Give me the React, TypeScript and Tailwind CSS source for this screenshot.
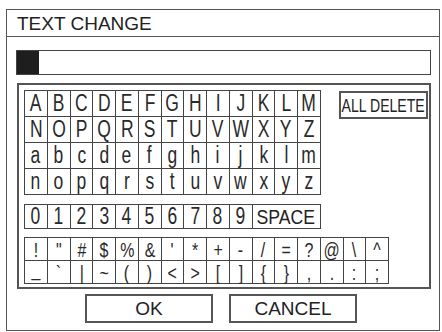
const LETTERS = [
  'A', 'B', 'C', 'D', 'E', 'F', 'G', 'H', 'I', 'J', 'K', 'L', 'M',
  'N', 'O', 'P', 'Q', 'R', 'S', 'T', 'U', 'V', 'W', 'X', 'Y', 'Z',
  'a', 'b', 'c', 'd', 'e', 'f', 'g', 'h', 'i', 'j', 'k', 'l', 'm',
  'n', 'o', 'p', 'q', 'r', 's', 't', 'u', 'v', 'w', 'x', 'y', 'z',
]

const DIGITS = ['0', '1', '2', '3', '4', '5', '6', '7', '8', '9']

const SYMBOLS = [
  '!', '"', '#', '$', '%', '&', "'", '*', '+', '-', '/', '=', '?', '@', '\\', '^',
  '_', '`', '|', '~', '(', ')', '<', '>', '[', ']', '{', '}', ',', '.', ':', ';',
]

function Key({ label, h, size = 'text-[23px]' }: { label: string; h: string; size?: string }) {
  return (
    <div className={`${h} border-r border-b border-[#444] flex items-center justify-center`}>
      <span
        className={`inline-block ${size} leading-none scale-x-[0.76] text-[#2a2a2a] ${
          label === '_' ? '-translate-y-[4px]' : ''
        }`}
      >
        {label}
      </span>
    </div>
  )
}

export default function App() {
  return (
    <div className="w-[442px] h-[332px] bg-white pt-[9px] pl-[6px] font-['Liberation_Sans',Arial,sans-serif]">
      <div className="w-[434px] h-[322px] border border-[#555] flex flex-col">
        {/* title bar */}
        <div className="h-[27px] border-b border-[#555] flex items-center pl-[10px]">
          <span className="text-[19px] leading-none text-[#222]">TEXT CHANGE</span>
        </div>

        {/* input field with cursor */}
        <div className="mt-[13px] ml-[9px] w-[415px] h-[25px] border border-[#444] flex">
          <div className="w-[22px] h-full bg-[#1e1e1e]" />
        </div>

        {/* keyboard panel */}
        <div className="mt-[8px] ml-[10px] w-[414px] h-[206px] border-2 border-[#555] pt-[5px] pl-[5px] flex flex-col">
          <div className="flex items-start">
            <div className="grid grid-cols-[repeat(13,22.75px)] border-l border-t border-[#444]">
              {LETTERS.map((c, i) => (
                <Key key={i} label={c} h="h-[26px]" />
              ))}
            </div>
            <div className="ml-[18px] mt-px w-[89px] h-[28px] border-2 border-[#555] flex items-center justify-center">
              <span className="inline-block text-[19px] leading-none scale-x-[0.74] whitespace-nowrap text-[#222]">
                ALL DELETE
              </span>
            </div>
          </div>

          <div className="mt-[9px] grid grid-cols-[repeat(10,22.75px)_68.25px] w-fit border-l border-t border-[#444]">
            {DIGITS.map((c) => (
              <Key key={c} label={c} h="h-[24px]" />
            ))}
            <div className="h-[24px] border-r border-b border-[#444] flex items-center justify-center">
              <span className="inline-block text-[21px] leading-none scale-x-[0.84] text-[#222]">SPACE</span>
            </div>
          </div>

          <div className="mt-[8px] grid grid-cols-[repeat(16,22.75px)] w-fit border-l border-t border-[#444]">
            {SYMBOLS.map((c, i) => (
              <Key key={i} label={c} h="h-[23px]" size="text-[21px]" />
            ))}
          </div>
        </div>

        {/* buttons */}
        <div className="mt-[5px] flex justify-center gap-[16px] pr-[4px]">
          <button className="w-[128px] h-[29px] border-2 border-[#555] flex items-center justify-center text-[19px] leading-none text-[#222]">
            OK
          </button>
          <button className="w-[128px] h-[29px] border-2 border-[#555] flex items-center justify-center text-[19px] leading-none text-[#222]">
            CANCEL
          </button>
        </div>
      </div>
    </div>
  )
}
